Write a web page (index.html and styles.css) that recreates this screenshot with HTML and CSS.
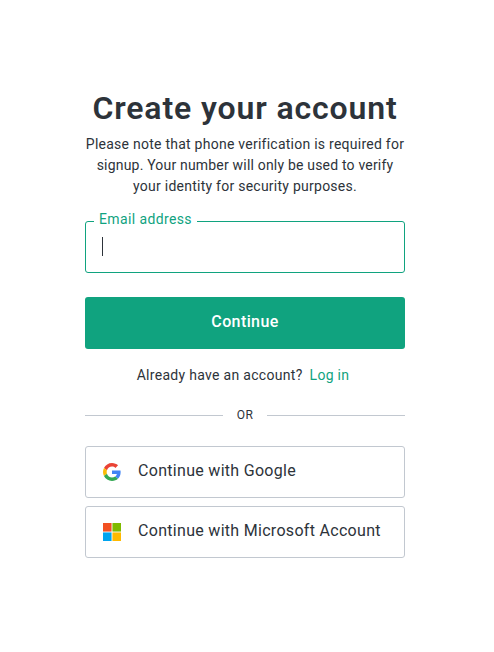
FILE: index.html
```
<!DOCTYPE html>
<html lang="en">
<head>
    <meta charset="UTF-8">
    <meta name="viewport" content="width=device-width, initial-scale=1.0">
    <title>Create your account</title>
    <link rel="stylesheet" href="styles.css">
</head>
<body>

<main class="container">
    <h1>Create your account</h1>
    <p class="subtitle">
        <span class="line">Please note that phone verification is required for</span>
        <span class="line line-2">signup. Your number will only be used to verify</span>
        <span class="line">your identity for security purposes.</span>
    </p>

    <form class="signup-form" onsubmit="return false">
        <div class="field">
            <label class="field-label" for="email">Email address</label>
            <div class="field-input" id="email" role="textbox"><span class="caret"></span></div>
        </div>
        <button class="submit-btn" type="submit">Continue</button>
    </form>

    <p class="login"><span>Already have an account?</span><a href="#">Log in</a></p>

    <div class="divider"><span>OR</span></div>

    <div class="providers">
        <button class="provider-btn" type="button">
            <svg class="icon" viewBox="0 0 48 48">
                <path fill="#EA4335" d="M24 9.5c3.54 0 6.71 1.22 9.21 3.6l6.85-6.85C35.9 2.38 30.47 0 24 0 14.62 0 6.51 5.38 2.56 13.22l7.98 6.19C12.43 13.72 17.74 9.5 24 9.5z"/>
                <path fill="#4285F4" d="M46.98 24.55c0-1.57-.15-3.09-.38-4.55H24v9.02h12.94c-.58 2.96-2.26 5.48-4.78 7.18l7.73 6c4.51-4.18 7.09-10.36 7.09-17.65z"/>
                <path fill="#FBBC05" d="M10.53 28.59c-.48-1.45-.76-2.99-.76-4.59s.27-3.14.76-4.59l-7.98-6.19C.92 16.46 0 20.12 0 24c0 3.88.92 7.54 2.56 10.78l7.97-6.19z"/>
                <path fill="#34A853" d="M24 48c6.48 0 11.93-2.13 15.89-5.81l-7.73-6c-2.15 1.45-4.92 2.3-8.16 2.3-6.26 0-11.57-4.22-13.47-9.91l-7.98 6.19C6.51 42.62 14.62 48 24 48z"/>
            </svg>
            <span>Continue with Google</span>
        </button>
        <button class="provider-btn" type="button">
            <svg class="icon" viewBox="0 0 21 21">
                <path fill="#f25022" d="M0 0h10v10H0z"/>
                <path fill="#7fba00" d="M11 0h10v10H11z"/>
                <path fill="#00a4ef" d="M0 11h10v10H0z"/>
                <path fill="#ffb900" d="M11 11h10v10H11z"/>
            </svg>
            <span>Continue with Microsoft Account</span>
        </button>
    </div>
</main>

</body>
</html>
```
FILE: styles.css
```
* {
    margin: 0;
    padding: 0;
    box-sizing: border-box;
}
body {
    font-family: Roboto, "Liberation Sans", sans-serif;
    background-color: #fff;
    color: #2d333a;
}
.container {
    width: 320px;
    margin: 88px 0 0 85px;
}
h1 {
    font-size: 32px;
    font-weight: 600;
    line-height: 40px;
    letter-spacing: 0.87px;
    text-align: center;
    white-space: nowrap;
}
.subtitle {
    margin-top: 6px;
    font-size: 14px;
    line-height: 21px;
    letter-spacing: 0.25px;
    text-align: center;
}
.line {
    display: block;
    white-space: nowrap;
}
.line-2 {
    letter-spacing: 0.19px;
}
.field {
    position: relative;
    margin-top: 24px;
}
.field-label {
    position: absolute;
    top: -12px;
    left: 9px;
    padding: 0 5px;
    background-color: #fff;
    color: #10a37f;
    font-size: 14px;
    line-height: 21px;
    letter-spacing: 0.38px;
    white-space: nowrap;
}
.field-input {
    height: 52px;
    padding: 15px 16px;
    border: 1px solid #10a37f;
    border-radius: 3px;
}
.caret {
    display: block;
    width: 1px;
    height: 19px;
    background-color: #2d333a;
}
button {
    font-family: inherit;
    font-size: 16px;
    letter-spacing: 0.3px;
    cursor: pointer;
}
.submit-btn {
    display: block;
    width: 100%;
    height: 52px;
    margin-top: 24px;
    padding-bottom: 3px;
    border: none;
    border-radius: 3px;
    background-color: #10a37f;
    color: #fff;
    font-weight: 500;
    letter-spacing: 0.4px;
}
.login {
    display: flex;
    justify-content: center;
    gap: 7px;
    margin: 16px 0 0 -4px;
    font-size: 14px;
    line-height: 21px;
    letter-spacing: 0.3px;
}
.login a {
    color: #10a37f;
    text-decoration: none;
}
.divider {
    display: flex;
    align-items: center;
    margin-top: 21px;
    font-size: 12px;
    line-height: 16px;
    letter-spacing: 0.3px;
}
.divider::before,
.divider::after {
    content: "";
    flex: 1;
    height: 1px;
    background-color: #c2c8d0;
}
.divider span {
    width: 44px;
    text-align: center;
}
.providers {
    display: grid;
    gap: 8px;
    margin-top: 23px;
}
.provider-btn {
    display: flex;
    align-items: center;
    height: 52px;
    padding: 0 17px;
    border: 1px solid #c2c8d0;
    border-radius: 3px;
    background-color: #fff;
    color: #2d333a;
    white-space: nowrap;
}
.provider-btn span {
    margin: 0 0 3px 17px;
}
.icon {
    width: 18px;
    height: 18px;
}
```
